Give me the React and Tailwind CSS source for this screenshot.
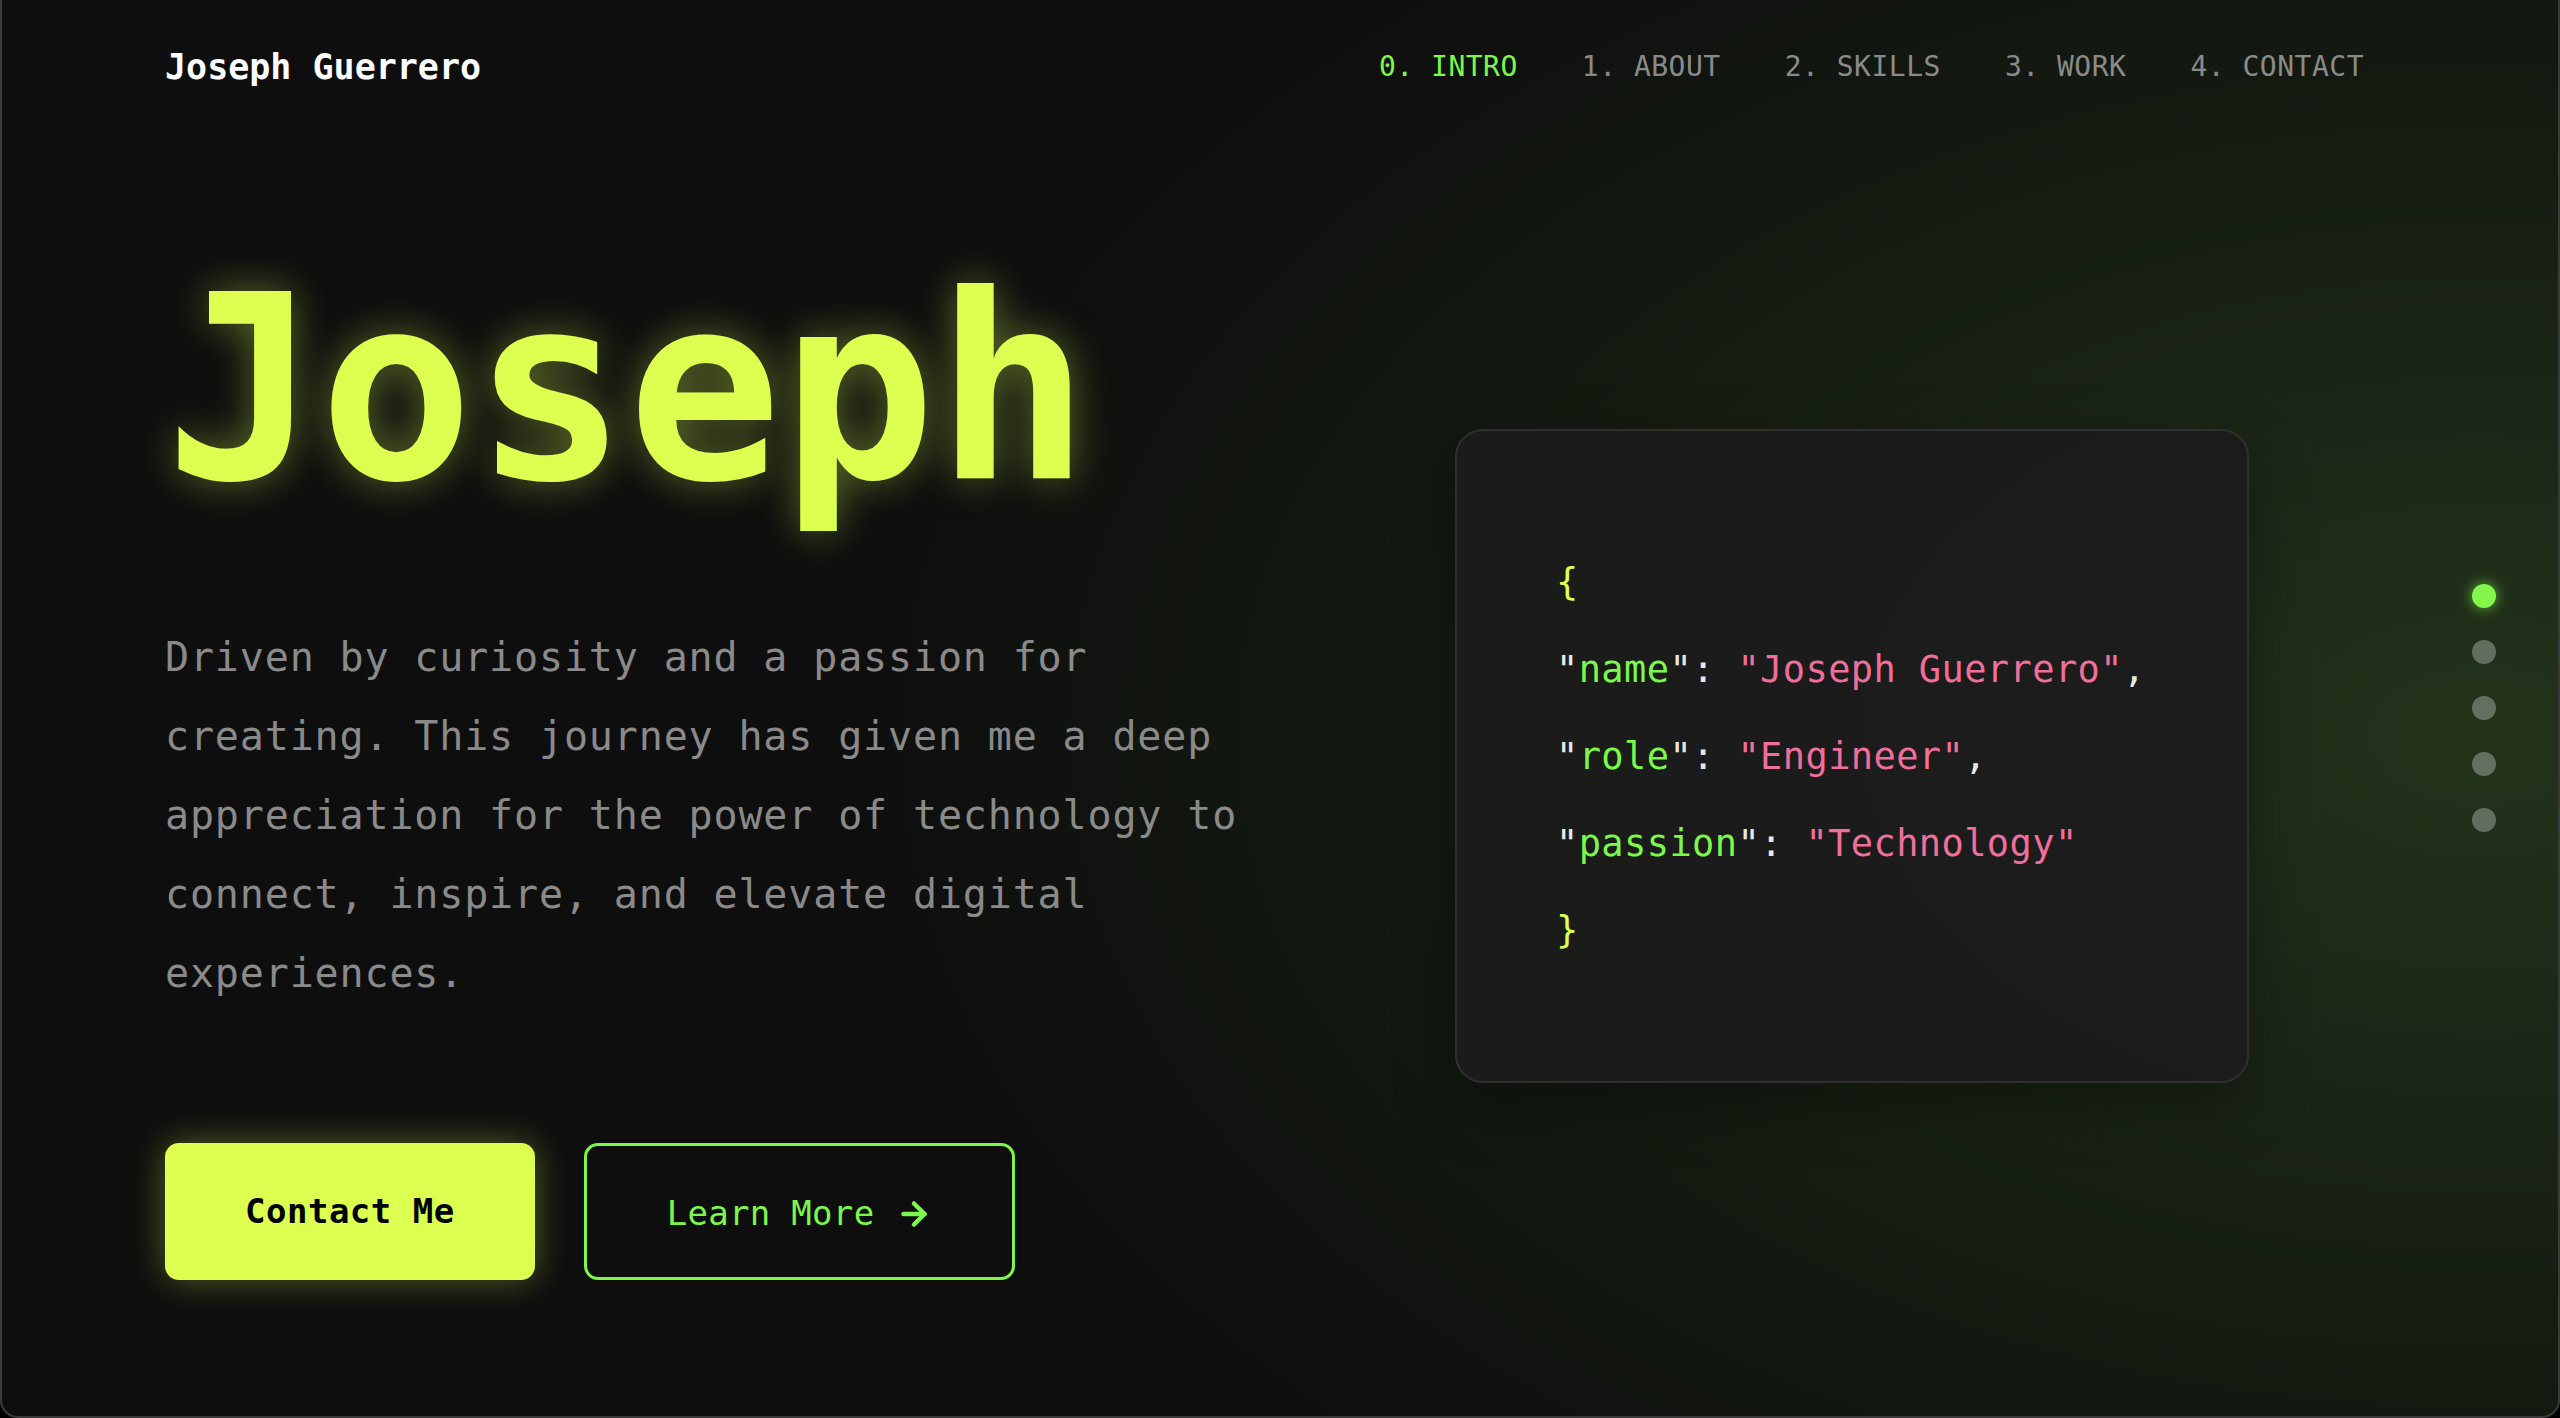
import React from "react";
import { ArrowRight } from "lucide-react";

const mono = "font-['DejaVu_Sans_Mono',monospace]";

export default function App() {
  const nav = ["0. INTRO", "1. ABOUT", "2. SKILLS", "3. WORK", "4. CONTACT"];
  return (
    <div className="w-[2560px] h-[1418px] bg-black overflow-hidden">
      <div
        className={`relative w-full h-full overflow-hidden rounded-b-[18px] border-x-2 border-b-2 border-[#3a3a3a] bg-[#0e0e0e] bg-[radial-gradient(ellipse_64%_72%_at_97%_52%,#23331b_0%,#1c2717_32%,#141b11_62%,#0e0e0e_100%)] ${mono}`}
      >
        {/* Header */}
        <header className="h-[134px] flex items-center justify-between pl-[163px] pr-[194px]">
          <div className="text-[35px] font-bold text-white leading-none">Joseph Guerrero</div>
          <nav className="flex items-center gap-[64px] text-[28px] tracking-[0.5px] leading-none">
            {nav.map((n, i) => (
              <span key={n} className={i === 0 ? "text-[#7cf84a]" : "text-[#8a8a8a]"}>
                {n}
              </span>
            ))}
          </nav>
        </header>

        {/* Hero */}
        <main className="flex items-start pl-[163px] mt-[127px]">
          <div className="w-[1120px] flex flex-col">
            <h1 className="text-[256px] font-bold leading-none text-[#dcff50] [text-shadow:0_0_40px_rgba(220,255,80,0.4)]">
              Joseph
            </h1>
            <p className="mt-[101px] text-[40px] tracking-[0.85px] leading-[79px] text-[#8a8a8a]">
              Driven by curiosity and a passion for creating. This journey has given me a deep appreciation for the power of technology to connect, inspire, and elevate digital experiences.
            </p>
            <div className="mt-[130px] flex items-center gap-[49px]">
              <button className="h-[137px] px-[80px] rounded-[14px] bg-[#dcff50] text-black font-bold text-[34px] tracking-[0.5px] shadow-[0_0_34px_rgba(220,255,80,0.35)]">
                Contact Me
              </button>
              <button className="h-[137px] px-[80px] rounded-[14px] border-[3px] border-[#7cf84a] text-[#7cf84a] text-[34px] tracking-[0.3px] flex items-center gap-[22px] pt-[4px]">
                <span>Learn More</span>
                <ArrowRight size={36} strokeWidth={3} />
              </button>
            </div>
          </div>

          {/* Code card */}
          <div className="ml-[170px] mt-[168px] w-[794px] h-[654px] rounded-[28px] border-2 border-[#303030] bg-[#1b1b1b]/95 flex flex-col justify-center pl-[99px] text-[37px] tracking-[0.4px] leading-[87px] shadow-[0_20px_60px_rgba(0,0,0,0.35)]">
            <div className="text-[#dcff50]">{"{"}</div>
            <div className="whitespace-pre">
              <span className="text-[#e8e8e8]">"</span>
              <span className="text-[#7cf84a]">name</span>
              <span className="text-[#e8e8e8]">": </span>
              <span className="text-[#f06e9a]">"Joseph Guerrero"</span>
              <span className="text-[#e8e8e8]">,</span>
            </div>
            <div className="whitespace-pre">
              <span className="text-[#e8e8e8]">"</span>
              <span className="text-[#7cf84a]">role</span>
              <span className="text-[#e8e8e8]">": </span>
              <span className="text-[#f06e9a]">"Engineer"</span>
              <span className="text-[#e8e8e8]">,</span>
            </div>
            <div className="whitespace-pre">
              <span className="text-[#e8e8e8]">"</span>
              <span className="text-[#7cf84a]">passion</span>
              <span className="text-[#e8e8e8]">": </span>
              <span className="text-[#f06e9a]">"Technology"</span>
            </div>
            <div className="text-[#dcff50]">{"}"}</div>
          </div>
        </main>

        {/* Side dots */}
        <div className="absolute right-[62px] top-1/2 -translate-y-1/2 flex flex-col gap-[32px]">
          <span className="block w-[24px] h-[24px] rounded-full bg-[#84f54a] shadow-[0_0_14px_rgba(126,248,74,0.7)]" />
          <span className="block w-[24px] h-[24px] rounded-full bg-white/30" />
          <span className="block w-[24px] h-[24px] rounded-full bg-white/30" />
          <span className="block w-[24px] h-[24px] rounded-full bg-white/30" />
          <span className="block w-[24px] h-[24px] rounded-full bg-white/30" />
        </div>
      </div>
    </div>
  );
}
